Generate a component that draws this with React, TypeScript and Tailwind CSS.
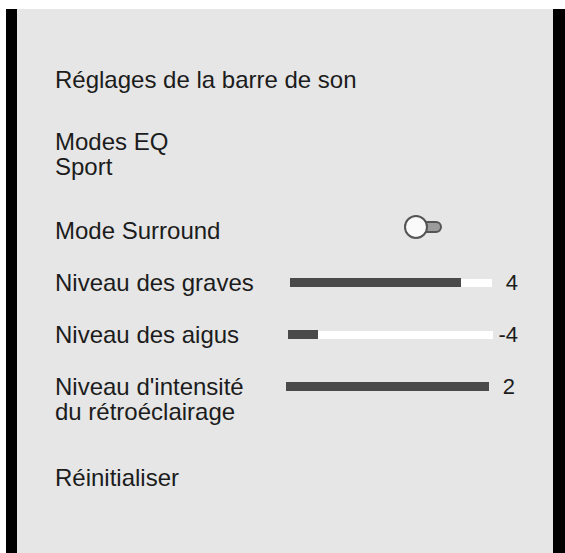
import React from "react";

function Bar({ dark, light, mt = "mt-[8px]" }: { dark: number; light: number; mt?: string }) {
  return (
    <div className={`flex items-center ${mt}`}>
      <div className="h-[9px] bg-[#4a4a4a]" style={{ width: dark }} />
      {light > 0 && <div className="h-[8px] bg-white" style={{ width: light }} />}
    </div>
  );
}

export default function App() {
  return (
    <div className="min-h-[553px] bg-white pt-[9px] pl-[6px]">
      <div className="h-[544px] bg-black pl-[11px] pr-[12px]">
        <div
          className="h-full bg-[#e6e6e6] pl-[38px] pr-[35px] pt-[58px] text-[24px] leading-[25px] text-[#1c1c1c]"
          style={{ fontFamily: '"Liberation Sans", Arial, sans-serif' }}
        >
          <div>Réglages de la barre de son</div>

          <div className="mt-[37px]">
            Modes EQ
            <br />
            Sport
          </div>

          <div className="mt-[39px] flex items-start">
            <div className="w-[349px] flex-none">Mode Surround</div>
            <div className="-mt-[3px] flex h-[24px] items-center">
              <div className="relative z-10 h-[24px] w-[24px] rounded-full border-2 border-[#555] bg-[#fafafa]" />
              <div className="-ml-[3px] h-[12px] w-[17px] rounded-r-full border-2 border-[#555] bg-[#9c9c9c]" />
            </div>
          </div>

          <div className="mt-[27px] flex items-start">
            <div className="w-[235px] flex-none">Niveau des graves</div>
            <Bar dark={171} light={31} />
            <div className="ml-auto text-[22px]">4</div>
          </div>

          <div className="mt-[27px] flex items-start">
            <div className="w-[233px] flex-none">Niveau des aigus</div>
            <Bar dark={30} light={175} />
            <div className="ml-auto text-[22px]">-4</div>
          </div>

          <div className="mt-[27px] flex items-start">
            <div className="w-[231px] flex-none">
              Niveau d'intensité
              <br />
              du rétroéclairage
            </div>
            <Bar dark={203} light={0} />
            <div className="ml-auto mr-[3px] text-[22px]">2</div>
          </div>

          <div className="mt-[41px]">Réinitialiser</div>
        </div>
      </div>
    </div>
  );
}
